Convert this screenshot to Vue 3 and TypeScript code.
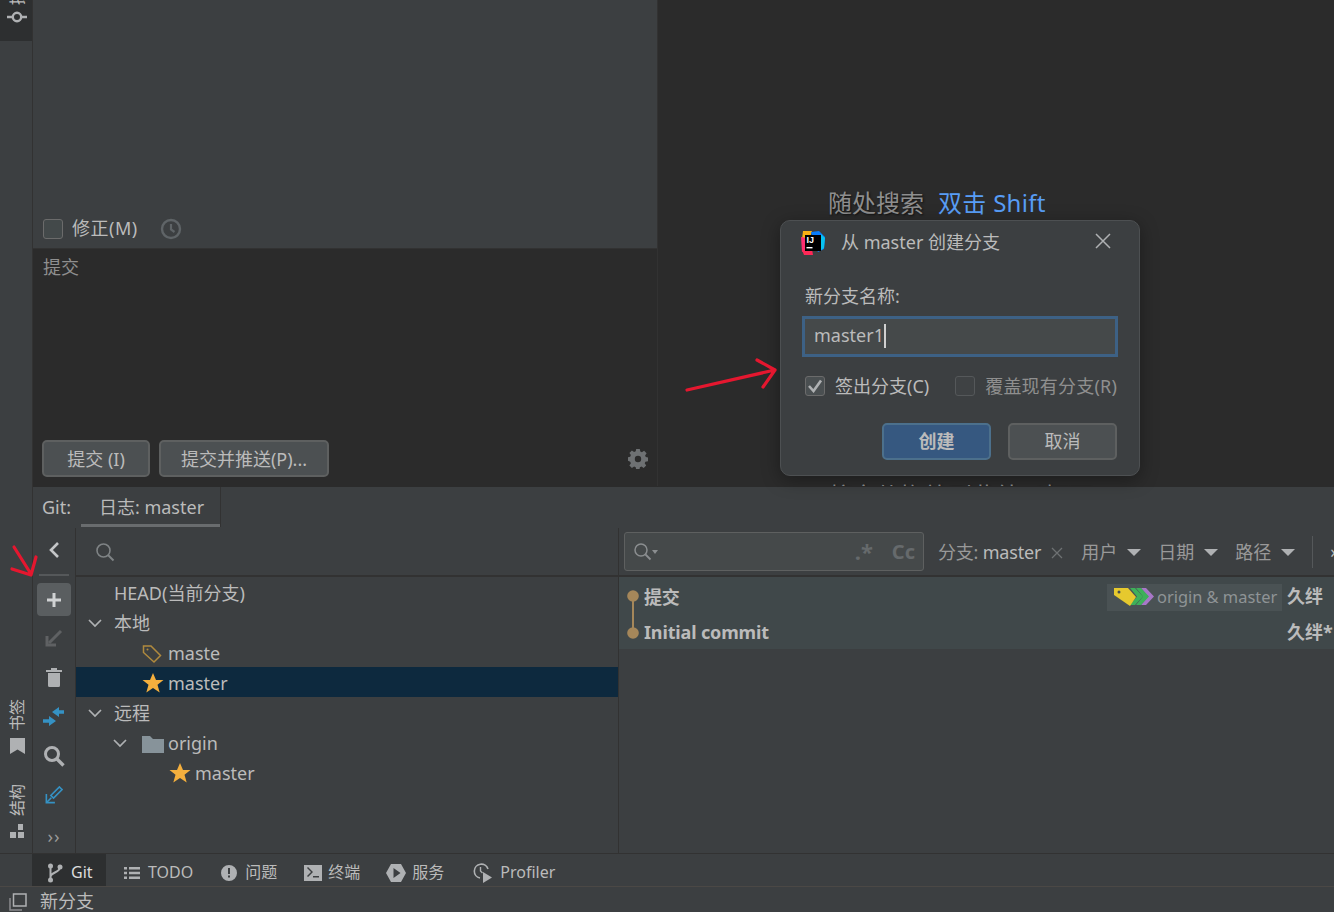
<script setup lang="ts">
interface TreeRow { label: string; indent: number; icon?: 'tag' | 'star' | 'folder'; arrow?: boolean; selected?: boolean }
const tree: TreeRow[] = [
  { label: 'HEAD(当前分支)', indent: 38 },
  { label: '本地', indent: 38, arrow: true },
  { label: 'maste', indent: 92, icon: 'tag' },
  { label: 'master', indent: 92, icon: 'star', selected: true },
  { label: '远程', indent: 38, arrow: true },
  { label: 'origin', indent: 92, icon: 'folder', arrow: true },
  { label: 'master', indent: 119, icon: 'star' },
]
const filters = ['用户', '日期', '路径']
</script>

<template>
  <div class="ide">
    <aside class="rail">
      <div class="rail-top">
        <span class="vtext">提交</span>
        <svg width="20" height="14" viewBox="0 0 20 14"><circle cx="10" cy="7" r="4.2" fill="none" stroke="#afb1b3" stroke-width="2.4"/><path d="M0 7h5.5M14.5 7H20" stroke="#afb1b3" stroke-width="2.4"/></svg>
      </div>
      <div class="rail-bottom">
        <span class="vtext">书签</span>
        <svg class="rail-icon" width="15" height="16" viewBox="0 0 15 16"><path d="M0 0h15v16l-7.500-4.500L0 16z" fill="#afb1b3"/></svg>
        <span class="vtext second">结构</span>
        <svg class="rail-icon" width="16" height="16" viewBox="0 0 16 16"><path d="M9 1h5v6H9zM1 9h6v6H1zM9 9h6v6H9z" fill="#afb1b3"/></svg>
      </div>
    </aside>

    <div class="main">
      <div class="top">
        <section class="commit">
          <div class="changes"></div>
          <div class="amend">
            <span class="check"></span>
            <span class="amend-label">修正(M)</span>
            <svg width="22" height="22" viewBox="0 0 22 22"><circle cx="11" cy="11" r="9" fill="none" stroke="#5f6467" stroke-width="2.4"/><path d="M11 6v5.500l3.500 2.500" fill="none" stroke="#5f6467" stroke-width="2.200"/></svg>
          </div>
          <div class="message">
            <div class="placeholder">提交</div>
            <div class="commit-actions">
              <button class="btn commit-one">提交 (I)</button>
              <button class="btn commit-two">提交并推送(P)...</button>
              <svg class="gear" width="20" height="20" viewBox="0 0 20 20"><path fill="#6e7173" fill-rule="evenodd" d="M8.200 0h3.600l.5 2.600 1.600.7L16.100 1.800l2.500 2.500-1.500 2.200.7 1.600 2.200.5v3.600l-2.600.5-.7 1.600 1.500 2.200-2.500 2.500-2.200-1.500-1.600.7-.5 2.600H8.200l-.5-2.600-1.600-.7-2.200 1.500-2.500-2.500 1.500-2.200-.7-1.600L0 11.800V8.200l2.200-.5.7-1.600-1.500-2.200 2.500-2.500 2.200 1.500 1.600-.7zM10 6.800a3.200 3.200 0 1 0 0 6.400 3.200 3.200 0 0 0 0-6.400z"/></svg>
            </div>
          </div>
        </section>
        <section class="editor">
          <p class="hint"><span>随处搜索</span><em>双击 Shift</em></p>
          <p class="hint last"><span>将文件拖放到此处以打开</span></p>
        </section>
      </div>

      <section class="git">
        <div class="git-tabs">
          <span class="git-title">Git:</span>
          <span class="git-tab">日志: master</span>
        </div>
        <div class="git-body">
          <div class="toolbar">
            <svg class="tool back" width="14" height="18" viewBox="0 0 14 18"><path d="M11 2 4 9l7 7" fill="none" stroke="#c4c6c8" stroke-width="2.600"/></svg>
            <span class="tool-sep"></span>
            <span class="tool-active"><svg width="18" height="18" viewBox="0 0 18 18"><path d="M9 2v14M2 9h14" stroke="#d0d2d3" stroke-width="3"/></svg></span>
            <svg class="tool t-arrow" width="18" height="18" viewBox="0 0 18 18"><path d="M16 2 4 14" stroke="#5f6163" stroke-width="3"/><path d="M2 7v9h9" fill="none" stroke="#5f6163" stroke-width="3"/></svg>
            <svg class="tool t-trash" width="16" height="20" viewBox="0 0 16 20"><path d="M0 3h16v2H0zM5 1h6v2H5zM2 6h12v12.500a1.500 1.500 0 0 1-1.500 1.500h-9A1.500 1.500 0 0 1 2 18.500z" fill="#afb1b3"/></svg>
            <svg class="tool t-merge" width="22" height="22" viewBox="0 0 22 22"><path d="M21 6h-7M0 15h7" stroke="#3592c4" stroke-width="3.400"/><path d="M9 6l7-5v10zM13 15l-7-5v10z" fill="#3592c4"/></svg>
            <svg class="tool t-search" width="22" height="22" viewBox="0 0 22 22"><circle cx="9" cy="9" r="6.500" fill="none" stroke="#afb1b3" stroke-width="3"/><path d="m13.500 13.500 7 7" stroke="#afb1b3" stroke-width="3.400"/></svg>
            <svg class="tool t-update" width="18" height="18" viewBox="0 0 20 20"><path d="M18 3 16 1 6.500 10.500 9.500 13.500 19 4zM7 13 2 18" fill="none" stroke="#3592c4" stroke-width="1.800"/><path d="M1.500 9v9.500H11" fill="none" stroke="#3592c4" stroke-width="1.800"/></svg>
            <span class="tool-more">››</span>
          </div>

          <div class="branches">
            <div class="pane-head">
              <svg width="20" height="20" viewBox="0 0 20 20"><circle cx="8.500" cy="8.500" r="6.500" fill="none" stroke="#7f8385" stroke-width="1.600"/><path d="m13 13 5.500 5.500" stroke="#7f8385" stroke-width="2"/></svg>
            </div>
            <div class="tree">
              <div v-for="(row, i) in tree" :key="i" class="row" :class="{ selected: row.selected }" :style="{ paddingLeft: row.indent + 'px' }">
                <svg v-if="row.arrow" class="chev" :style="{ left: row.indent - (row.icon ? 55 : 26) + 'px' }" width="14" height="14" viewBox="0 0 14 14"><path d="m1 4 6 6 6-6" fill="none" stroke="#afb1b3" stroke-width="1.700"/></svg>
                <svg v-if="row.icon === 'tag'" class="row-icon" width="22" height="20" viewBox="0 0 22 20"><path d="M1.500 2h7.500l9.500 9.500-6.500 6.500-10.500-9.500z" fill="none" stroke="#b08a3e" stroke-width="1.500"/><circle cx="5.500" cy="5.500" r="1" fill="#b08a3e"/></svg>
                <svg v-else-if="row.icon === 'star'" class="row-icon star" width="22" height="22" viewBox="0 0 22 22"><path d="m11 1 3 7h7.500l-6 4.700 2.200 7.800L11 16l-6.700 4.500 2.200-7.800-6-4.700H8z" fill="#f4af3d"/></svg>
                <svg v-else-if="row.icon === 'folder'" class="row-icon" width="22" height="18" viewBox="0 0 22 18"><path d="M0 1h8l3 3h11v14H0z" fill="#87939a"/></svg>
                <span>{{ row.label }}</span>
              </div>
            </div>
          </div>

          <div class="log">
            <div class="log-head">
              <div class="log-search">
                <svg width="26" height="20" viewBox="0 0 26 20"><circle cx="8" cy="8" r="6" fill="none" stroke="#8b8e90" stroke-width="1.500"/><path d="m12.500 12.500 5 5" stroke="#8b8e90" stroke-width="1.800"/><path d="m19 8 6 0-3 4z" fill="#8b8e90"/></svg>
                <span class="regex">.*</span>
                <span class="case">Cc</span>
              </div>
              <span class="filter branch">分支: <b>master</b></span>
              <svg class="close-x" width="12" height="12" viewBox="0 0 12 12"><path d="m1 1 10 10M11 1 1 11" stroke="#6e7173" stroke-width="1.300"/></svg>
              <span v-for="f in filters" :key="f" class="filter drop">{{ f }}<i class="tri"></i></span>
              <span class="log-sep"></span>
              <span class="log-more">›</span>
            </div>
            <div class="commits">
              <svg class="graph" width="14" height="72" viewBox="0 0 14 72"><path d="M7 18v37" stroke="#a5875a" stroke-width="2"/><circle cx="7" cy="18" r="5.800" fill="#a5875a"/><circle cx="7" cy="55" r="5.800" fill="#a5875a"/></svg>
              <div class="commit-row">
                <span class="subject">提交</span>
                <span class="refs">
                  <svg width="42" height="20" viewBox="0 0 42 20">
                    <path d="M28 1h5l8 8.500-8 8.500h-5l7-8.500z" fill="#a877c8"/>
                    <path d="M23 1h5l8 8.500-8 8.500h-5l7-8.500z" fill="#3eb05a"/>
                    <path d="M17 1h5l8 8.500-8 8.500h-5l7-8.500z" fill="#3eb05a"/>
                    <path d="M1 1h14l8 9-6 9L1 8z" fill="#e6c92e"/>
                    <circle cx="6" cy="5" r="1.500" fill="#464c4e"/>
                  </svg>
                  <span>origin &amp; master</span>
                </span>
                <span class="author">久绊</span>
              </div>
              <div class="commit-row">
                <span class="subject">Initial commit</span>
                <span class="author">久绊*</span>
              </div>
            </div>
          </div>
        </div>
      </section>
    </div>

    <footer class="bottom">
      <nav class="tools">
        <span class="t active">
          <svg width="16" height="20" viewBox="0 0 16 20"><g fill="#afb1b3"><circle cx="3.500" cy="3" r="2.500"/><circle cx="3.500" cy="17" r="2.500"/><circle cx="13" cy="4" r="2.500"/></g><path d="M3.500 3v14M13 4c0 6-9.500 5-9.500 10" fill="none" stroke="#afb1b3" stroke-width="2"/></svg>
          <span class="t-label">Git</span>
        </span>
        <span class="t todo">
          <svg width="16" height="14" viewBox="0 0 16 14"><path d="M0 1h3v2.500H0zM5 1h11v2.500H5zM0 5.800h3v2.500H0zM5 5.800h11v2.500H5zM0 10.500h3V13H0zM5 10.500h11V13H5z" fill="#afb1b3"/></svg>
          TODO
        </span>
        <span class="t issue">
          <svg width="16" height="16" viewBox="0 0 16 16"><path fill="#afb1b3" fill-rule="evenodd" d="M8 0a8 8 0 1 1 0 16A8 8 0 0 1 8 0zM7 3v6h2V3zm0 7.500v2h2v-2z"/></svg>
          问题
        </span>
        <span class="t term">
          <svg width="18" height="16" viewBox="0 0 18 16"><path fill="#afb1b3" fill-rule="evenodd" d="M0 0h18v16H0zM3 3l4 4-4 4 1 1 5-5-5-5zm6 8v1.500h6V11z"/></svg>
          终端
        </span>
        <span class="t svc">
          <svg width="20" height="18" viewBox="0 0 20 18"><path fill="#afb1b3" fill-rule="evenodd" d="M5 0h10l5 9-5 9H5L0 9zM7.500 4v10l7-5z"/></svg>
          服务
        </span>
        <span class="t prof">
          <svg width="20" height="20" viewBox="0 0 20 20"><path d="M7 15A7 7 0 1 1 15 6" fill="none" stroke="#afb1b3" stroke-width="1.600"/><path d="M7.500 4v4l2 2" fill="none" stroke="#afb1b3" stroke-width="1.400"/><path d="M10 9l9 5.500-9 5.500z" fill="#afb1b3"/></svg>
          Profiler
        </span>
      </nav>
      <div class="status">
        <svg width="18" height="18" viewBox="0 0 18 18"><path d="M4.500 1h12.500v12H4.500z" fill="none" stroke="#afb1b3" stroke-width="1.500"/><path d="M1 5v12h12" fill="none" stroke="#8a8c8e" stroke-width="1.500"/></svg>
        <span>新分支</span>
      </div>
    </footer>

    <div class="dialog">
      <header class="dlg-head">
        <svg width="26" height="26" viewBox="0 0 26 26">
          <path d="M3 1h9l-2 7-8 1z" fill="#f9b012"/>
          <path d="M1 7l6 1v12l-5 2z" fill="#fc2e70"/>
          <path d="M2 20l10-1 1 6-9 0z" fill="#fe2857"/>
          <path d="M11 2l8-1 6 6-1 12-6 3-4-8z" fill="#087cfa"/>
          <path d="M21 4l4 4-1 10-4 3z" fill="#07c3f2"/>
          <rect x="5" y="5" width="16" height="16" fill="#000"/>
          <text x="6.500" y="13" class="ij">IJ</text>
          <rect x="6.500" y="17" width="6" height="1.400" fill="#fff"/>
        </svg>
        <span class="dlg-title">从 master 创建分支</span>
        <svg class="dlg-close" width="16" height="16" viewBox="0 0 16 16"><path d="m1 1 14 14M15 1 1 15" stroke="#afb1b3" stroke-width="1.500"/></svg>
      </header>
      <label class="dlg-label">新分支名称:</label>
      <div class="dlg-input"><span>master1</span><i class="caret"></i></div>
      <div class="dlg-options">
        <span class="opt"><span class="check on"><svg width="16" height="14" viewBox="0 0 16 14"><path d="m2 7 4.500 5L14 1.500" fill="none" stroke="#afb1b3" stroke-width="2.600"/></svg></span>签出分支(C)</span>
        <span class="opt off"><span class="check dim"></span>覆盖现有分支(R)</span>
      </div>
      <div class="dlg-actions">
        <button class="btn primary">创建</button>
        <button class="btn cancel">取消</button>
      </div>
    </div>

    <svg class="annot" width="1334" height="912" viewBox="0 0 1334 912">
      <g fill="none" stroke="#e5172f" stroke-width="3.200" stroke-linecap="round" stroke-linejoin="round">
        <path d="M687 390 775 370M757 360l18 10-12 17"/>
        <path d="M14 547 31 574M12 569l19 6 5-18"/>
      </g>
    </svg>
  </div>
</template>

<style>
html, body { margin: 0; background: #3c3f41; }
</style>

<style scoped>
.ide {
  position: relative;
  width: 1334px;
  height: 912px;
  overflow: hidden;
  display: grid;
  grid-template-columns: 33px 1fr;
  grid-template-rows: 853px 59px;
  background: #3c3f41;
  color: #bbbbbb;
  font-family: "Noto Sans", "Noto Sans CJK SC", sans-serif;
  font-size: 18px;
  line-height: 1.2;
}
.rail {
  display: flex;
  flex-direction: column;
  justify-content: space-between;
  border-right: 1px solid #323232;
  box-sizing: border-box;
}
.rail-top {
  height: 41px;
  background: #2d2f30;
  display: flex;
  flex-direction: column;
  align-items: center;
  justify-content: flex-end;
  padding-bottom: 17px;
  padding-left: 2px;
  box-sizing: border-box;
  overflow: hidden;
  gap: 5px;
  width: 32px;
}
.rail-top .vtext { flex: none; }
.rail-top svg { flex: none; }
.vtext {
  writing-mode: vertical-rl;
  text-orientation: sideways;
  transform: rotate(180deg);
  font-size: 16px;
  line-height: 18px;
}
.rail-bottom {
  display: flex;
  flex-direction: column;
  align-items: center;
  padding-bottom: 14px;
  padding-left: 2px;
}
.rail-icon { margin-top: 7px; }
.vtext.second { margin-top: 30px; }

.main { display: flex; flex-direction: column; min-width: 0; }
.top { height: 486px; display: flex; flex: none; border-bottom: 1px solid #2b2b2b; box-sizing: content-box; }
.commit { width: 625px; display: flex; flex-direction: column; flex: none; border-right: 1px solid #323232; box-sizing: border-box; }
.changes { flex: 1; }
.amend { height: 42px; display: flex; align-items: center; padding: 3px 10px 0; gap: 9px; flex: none; box-sizing: border-box; }
.check {
  width: 20px; height: 20px; box-sizing: border-box;
  border: 1px solid #6b6b6b; border-radius: 3px; background: #43494a;
  display: inline-flex; align-items: center; justify-content: center; flex: none;
}
.amend-label { margin-right: 13px; letter-spacing: .5px; }
.message {
  height: 238px; background: #2b2b2b; border-top: 1px solid #323232;
  box-sizing: border-box; display: flex; flex-direction: column; justify-content: space-between;
  padding: 8px 9px 9px;
}
.placeholder { color: #8f8f8f; margin-left: 1px; }
.commit-actions { display: flex; align-items: center; gap: 9px; }
.btn {
  font: inherit; color: #bbbbbb; height: 37px; box-sizing: border-box; padding: 1px 0 0;
  border: 2px solid #5e6060; border-radius: 5px; background: #4c5052;
}
.commit-one { width: 108px; padding-top: 3px; }
.commit-two { width: 170px; padding-top: 3px; }
.gear { margin-left: auto; margin-right: 0; }

.editor { flex: 1; background: #2b2b2b; padding-left: 170px; padding-top: 186px; overflow: hidden; height: 486px; box-sizing: border-box; }
.hint { margin: 0; font-size: 24px; line-height: 34px; color: #8e8e8e; white-space: nowrap; text-shadow: 1px 1px 2px #111; }
.hint em { font-style: normal; color: #589df6; margin-left: 14px; text-shadow: none; letter-spacing: .3px; }
.hint.last { margin-top: 259px; }

.git { flex: 1; display: flex; flex-direction: column; min-height: 0; }
.git-tabs { height: 40px; display: flex; align-items: stretch; padding-left: 9px; flex: none; }
.git-title { line-height: 40px; width: 39px; }
.git-tab {
  width: 140px; line-height: 40px; text-align: center; border-right: 1px solid #323232;
  box-shadow: inset 0 -3px 0 #696c6e; box-sizing: border-box; padding-left: 2px;
}
.git-body { flex: 1; display: flex; min-height: 0; border-top: 1px solid transparent; }
.toolbar {
  width: 43px; flex: none; border-right: 1px solid #323232; box-sizing: border-box;
  display: flex; flex-direction: column; align-items: center;
  padding-top: 13px;
}
.tool { flex: none; display: block; }
.tool-sep { width: 30px; height: 2px; background: #55585a; margin-top: 15px; }
.tool-active { width: 34px; height: 33px; background: #5a5e60; border-radius: 4px; margin-top: 7px; display: flex; align-items: center; justify-content: center; }
.t-arrow { margin-top: 13px; }
.t-trash { margin-top: 20px; }
.t-merge { margin-top: 19px; }
.t-search { margin-top: 17px; }
.t-update { margin-top: 19px; }
.tool-more { margin-top: 22px; font-size: 18px; line-height: 20px; letter-spacing: 1px; color: #9a9a9a; }

.branches { width: 543px; flex: none; border-right: 1px solid #323232; box-sizing: border-box; display: flex; flex-direction: column; }
.pane-head { height: 49px; padding-left: 19px; display: flex; align-items: center; border-bottom: 2px solid #323232; box-sizing: border-box; flex: none; }
.row { position: relative; height: 30px; box-sizing: border-box; padding-top: 4px; display: flex; align-items: center; gap: 4px; white-space: nowrap; }
.row.selected { background: #0d293e; }
.chev { position: absolute; top: 9px; }
.row-icon { flex: none; margin-left: -26px; }
.row-icon.star { margin-top: -2px; }

.log { flex: 1; min-width: 0; display: flex; flex-direction: column; }
.log-head { height: 49px; flex: none; border-bottom: 2px solid #323232; box-sizing: border-box; display: flex; align-items: center; padding-left: 5px; color: #999; white-space: nowrap; }
.log-search {
  width: 300px; height: 39px; box-sizing: border-box; border: 1px solid #5e6060; border-radius: 3px;
  background: #45494a; display: flex; align-items: center; padding: 0 8px 0 8px; margin-right: 14px; flex: none;
}
.regex { margin-left: auto; font-weight: 700; font-size: 22px; color: #666a6c; margin-right: 19px; }
.case { font-weight: 700; font-size: 20px; color: #666a6c; }
.filter { padding-top: 2px; }
.branch { letter-spacing: -.2px; }
.filter b { font-weight: 400; color: #bbb; }
.close-x { margin: 2px 18px 0 10px; flex: none; }
.drop { display: inline-flex; align-items: center; margin-right: 17px; }
.tri { width: 0; height: 0; border-left: 7px solid transparent; border-right: 7px solid transparent; border-top: 7px solid #afb1b3; margin-left: 10px; }
.log-sep { width: 1px; height: 32px; background: #55585a; margin-right: 17px; flex: none; }
.log-more { color: #bbb; font-size: 18px; }
.commits { position: relative; }
.graph { position: absolute; left: 7px; top: 1px; }
.commit-row { height: 36px; box-sizing: border-box; padding: 4px 0 0 25px; background: #40484a; display: flex; align-items: center; font-weight: 700; white-space: nowrap; overflow: hidden; }
.commit-row:first-of-type .subject { padding-top: 1px; }
.subject { flex: 1; letter-spacing: -.15px; }
.refs { height: 27px; width: 175px; background: #4a5254; display: flex; align-items: center; padding-left: 6px; gap: 2px; font-weight: 400; color: #8f9496; box-sizing: border-box; margin-right: 5px; flex: none; }
.refs svg { flex: none; }
.refs span { font-size: 16.4px; }
.author { width: 47px; flex: none; }

.bottom { grid-column: 1 / -1; display: flex; flex-direction: column; border-top: 1px solid #323232; box-sizing: border-box; }
.tools { height: 32px; display: flex; align-items: center; font-size: 16px; flex: none; border-bottom: 1px solid #4b4845; box-sizing: content-box; }
.t { display: inline-flex; align-items: center; height: 32px; box-sizing: border-box; padding-top: 6px; white-space: nowrap; }
.t.active { background: #2d2f30; width: 74px; margin-left: 32px; padding-left: 15px; }
.t-label { margin-left: 8px; color: #dcdcdc; }
.todo { margin-left: 18px; gap: 8px; }
.issue { margin-left: 28px; gap: 8px; }
.term { margin-left: 27px; gap: 6px; }
.svc { margin-left: 26px; gap: 6px; }
.prof { margin-left: 29px; gap: 7px; }
.status { flex: 1; display: flex; align-items: center; padding: 4px 0 0 9px; gap: 13px; font-size: 18px; }

.dialog {
  position: absolute; left: 780px; top: 220px; width: 360px; height: 256px; box-sizing: border-box;
  background: #3c3f41; border: 1px solid #4d5052; border-radius: 10px;
  box-shadow: 0 4px 18px rgba(0,0,0,.35);
  padding: 0 22px 0 24px;
  display: flex; flex-direction: column;
}
.dlg-head { height: 41px; display: flex; align-items: center; margin-left: -5px; margin-right: -9px; flex: none; padding-top: 1px; }
.ij { font-size: 9px; font-weight: 700; fill: #fff; font-family: "Liberation Sans", sans-serif; }
.dlg-title { margin-left: 15px; }
.dlg-close { margin-left: auto; margin-right: 15px; margin-bottom: 4px; }
.dlg-label { margin-top: 23px; }
.dlg-input {
  margin-top: 8px; margin-left: -3px; margin-right: -1px; height: 41px; box-sizing: border-box;
  border: 3px solid #3d6185; background: #45494a; display: flex; align-items: center; padding-left: 9px; flex: none;
}
.caret { width: 2px; height: 24px; background: #d0d0d0; display: block; }
.dlg-options { display: flex; margin-top: 19px; align-items: center; justify-content: space-between; white-space: nowrap; }
.opt { display: inline-flex; align-items: center; gap: 10px; }
.opt.off { color: #8f8f8f; letter-spacing: .2px; }
.check.on { background: #4a4f51; }
.check.dim { border-color: #55585a; background: #3f4244; }
.dlg-actions { display: flex; justify-content: flex-end; gap: 17px; margin-top: 26px; }
.dlg-actions .btn { width: 109px; }
.btn.primary { background: #365880; border-color: #4c708c; font-weight: 700; }
.annot { position: absolute; left: 0; top: 0; pointer-events: none; }
</style>
